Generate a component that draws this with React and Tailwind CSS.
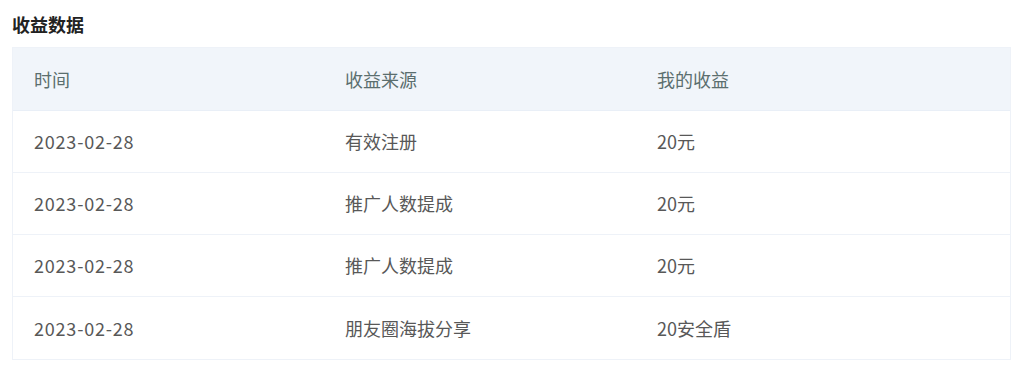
export default function App() {
  const rows = [
    ["2023-02-28", "有效注册", "20元"],
    ["2023-02-28", "推广人数提成", "20元"],
    ["2023-02-28", "推广人数提成", "20元"],
    ["2023-02-28", "朋友圈海拔分享", "20安全盾"],
  ];
  const font = { fontFamily: '"Noto Sans CJK SC", "Noto Sans", sans-serif' };
  return (
    <div className="w-[1024px] h-[373px] bg-white px-[12px] pt-[11px]" style={font}>
      <div className="text-[18px] leading-[26px] font-bold text-[#222]">收益数据</div>
      <div className="mt-[10px] w-[999px] border border-[#eef2f8]">
        <div className="grid grid-cols-[311px_312px_1fr] h-[63px] items-center bg-[#f1f5fa] text-[18px] text-[#5b6e6e] border-b border-[#e9eff7]">
          <div className="pl-[21px]">时间</div>
          <div className="pl-[21px]">收益来源</div>
          <div className="pl-[21px]">我的收益</div>
        </div>
        {rows.map((r, i) => (
          <div
            key={i}
            className={`grid grid-cols-[311px_312px_1fr] h-[62px] items-center text-[18px] text-[#585858] ${i < rows.length - 1 ? "border-b border-[#eef2f8]" : ""}`}
          >
            <div className="pl-[21px] tracking-[0.8px]">{r[0]}</div>
            <div className="pl-[21px]">{r[1]}</div>
            <div className="pl-[21px]">{r[2]}</div>
          </div>
        ))}
      </div>
    </div>
  );
}
